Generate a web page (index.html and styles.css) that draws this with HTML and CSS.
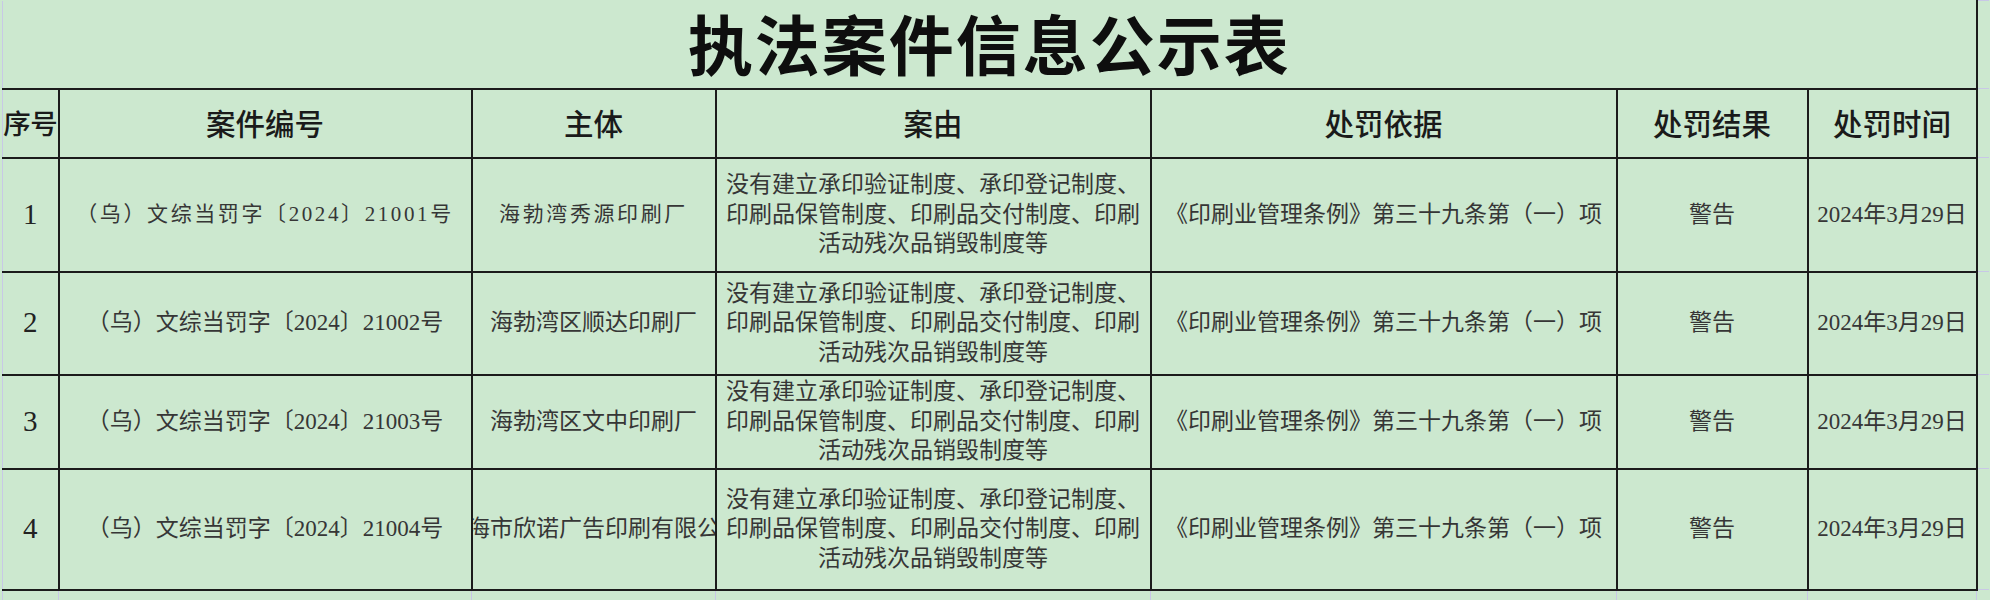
FILE: index.html
```html
<!DOCTYPE html>
<html lang="zh-CN">
<head>
<meta charset="utf-8">
<title>执法案件信息公示表</title>
<link rel="stylesheet" href="styles.css">
</head>
<body>
<table class="sheet">
  <colgroup>
    <col class="c-no">
    <col class="c-case">
    <col class="c-party">
    <col class="c-reason">
    <col class="c-basis">
    <col class="c-result">
    <col class="c-date">
    <col class="c-gutter">
  </colgroup>
  <tr class="r-title">
    <td class="title first" colspan="7">执法案件信息公示表</td>
    <td class="gutter"></td>
  </tr>
  <tr class="r-head">
    <th class="first narrow">序号</th>
    <th>案件编号</th>
    <th>主体</th>
    <th>案由</th>
    <th>处罚依据</th>
    <th>处罚结果</th>
    <th>处罚时间</th>
    <td class="gutter"></td>
  </tr>
  <tr class="r-1">
    <td class="first no">1</td>
    <td class="spaced">（乌）文综当罚字〔2024〕21001号</td>
    <td class="spaced">海勃湾秀源印刷厂</td>
    <td class="reason">没有建立承印验证制度、承印登记制度、<br>印刷品保管制度、印刷品交付制度、印刷<br>活动残次品销毁制度等</td>
    <td>《印刷业管理条例》第三十九条第（一）项</td>
    <td>警告</td>
    <td>2024年3月29日</td>
    <td class="gutter"></td>
  </tr>
  <tr class="r-2">
    <td class="first no">2</td>
    <td>（乌）文综当罚字〔2024〕21002号</td>
    <td>海勃湾区顺达印刷厂</td>
    <td class="reason">没有建立承印验证制度、承印登记制度、<br>印刷品保管制度、印刷品交付制度、印刷<br>活动残次品销毁制度等</td>
    <td>《印刷业管理条例》第三十九条第（一）项</td>
    <td>警告</td>
    <td>2024年3月29日</td>
    <td class="gutter"></td>
  </tr>
  <tr class="r-3">
    <td class="first no">3</td>
    <td>（乌）文综当罚字〔2024〕21003号</td>
    <td>海勃湾区文中印刷厂</td>
    <td class="reason">没有建立承印验证制度、承印登记制度、<br>印刷品保管制度、印刷品交付制度、印刷<br>活动残次品销毁制度等</td>
    <td>《印刷业管理条例》第三十九条第（一）项</td>
    <td>警告</td>
    <td>2024年3月29日</td>
    <td class="gutter"></td>
  </tr>
  <tr class="r-4">
    <td class="first no">4</td>
    <td>（乌）文综当罚字〔2024〕21004号</td>
    <td class="clip"><div class="clip-inner">上海市欣诺广告印刷有限公司</div></td>
    <td class="reason">没有建立承印验证制度、承印登记制度、<br>印刷品保管制度、印刷品交付制度、印刷<br>活动残次品销毁制度等</td>
    <td>《印刷业管理条例》第三十九条第（一）项</td>
    <td>警告</td>
    <td>2024年3月29日</td>
    <td class="gutter"></td>
  </tr>
  <tr class="r-ghost">
    <td class="first"></td>
    <td></td>
    <td></td>
    <td></td>
    <td></td>
    <td></td>
    <td></td>
    <td class="gutter"></td>
  </tr>
</table>
</body>
</html>
```

FILE: styles.css
```css
html, body {
  margin: 0;
  padding: 0;
  background: #cce8cf;
}

body {
  width: 1990px;
  height: 600px;
  overflow: hidden;
}

.sheet {
  margin-left: 2px;
  border-collapse: collapse;
  table-layout: fixed;
  width: 1986px;
  font-family: "Liberation Serif", "Noto Sans CJK SC", serif;
  font-size: 23px;
  color: #363636;
}

.c-no { width: 56px; }
.c-case { width: 413px; }
.c-party { width: 244px; }
.c-reason { width: 435px; }
.c-basis { width: 466px; }
.c-result { width: 191px; }
.c-date { width: 169px; }
.c-gutter { width: 12px; }

.sheet td,
.sheet th {
  border: 2px solid #1b1b1b;
  padding: 0 3px;
  text-align: center;
  vertical-align: middle;
  white-space: nowrap;
  overflow: hidden;
  line-height: 29.5px;
}

.sheet .first {
  border-left: 1px solid #c8c8e6;
}

.r-title { height: 88px; }
.r-head { height: 69px; }
.r-1 { height: 114px; }
.r-2 { height: 103px; }
.r-3 { height: 94px; }
.r-4 { height: 121px; }
.r-ghost { height: 12px; }

.sheet .title {
  border-top: 0;
  border-right: 1px solid #c8c8e6;
  font-family: "Noto Sans CJK SC", sans-serif;
  font-weight: 700;
  font-size: 65px;
  letter-spacing: 2px;
  color: #0e0e0e;
  line-height: 72px;
  overflow: visible;
  padding: 0 0 4px 0;
}

.sheet th {
  font-family: "Noto Sans CJK SC", sans-serif;
  font-weight: 500;
  font-size: 29.5px;
  color: #1a1a1a;
  padding: 0;
}

.sheet th.narrow {
  font-size: 27.5px;
  letter-spacing: -0.5px;
}

.sheet .no {
  font-family: "Liberation Serif", serif;
  font-size: 29px;
  color: #222;
  padding: 0;
}

.sheet .spaced {
  font-size: 21px;
  letter-spacing: 2.6px;
}

.sheet .reason {
  padding: 0;
}

.sheet .clip {
  padding: 0;
}

.clip-inner {
  display: flex;
  justify-content: center;
  overflow: hidden;
  white-space: nowrap;
}

.sheet .gutter {
  border-top: 1px solid #c8c8e6;
  border-bottom: 1px solid #c8c8e6;
  border-right: 0;
  padding: 0;
}

.r-ghost td {
  border-left: 1px solid #c8c8e6;
  border-right: 1px solid #c8c8e6;
  border-bottom: 0;
}

.r-ghost .gutter {
  border-top: 1px solid #c8c8e6;
  border-left: 1px solid #c8c8e6;
}
```
